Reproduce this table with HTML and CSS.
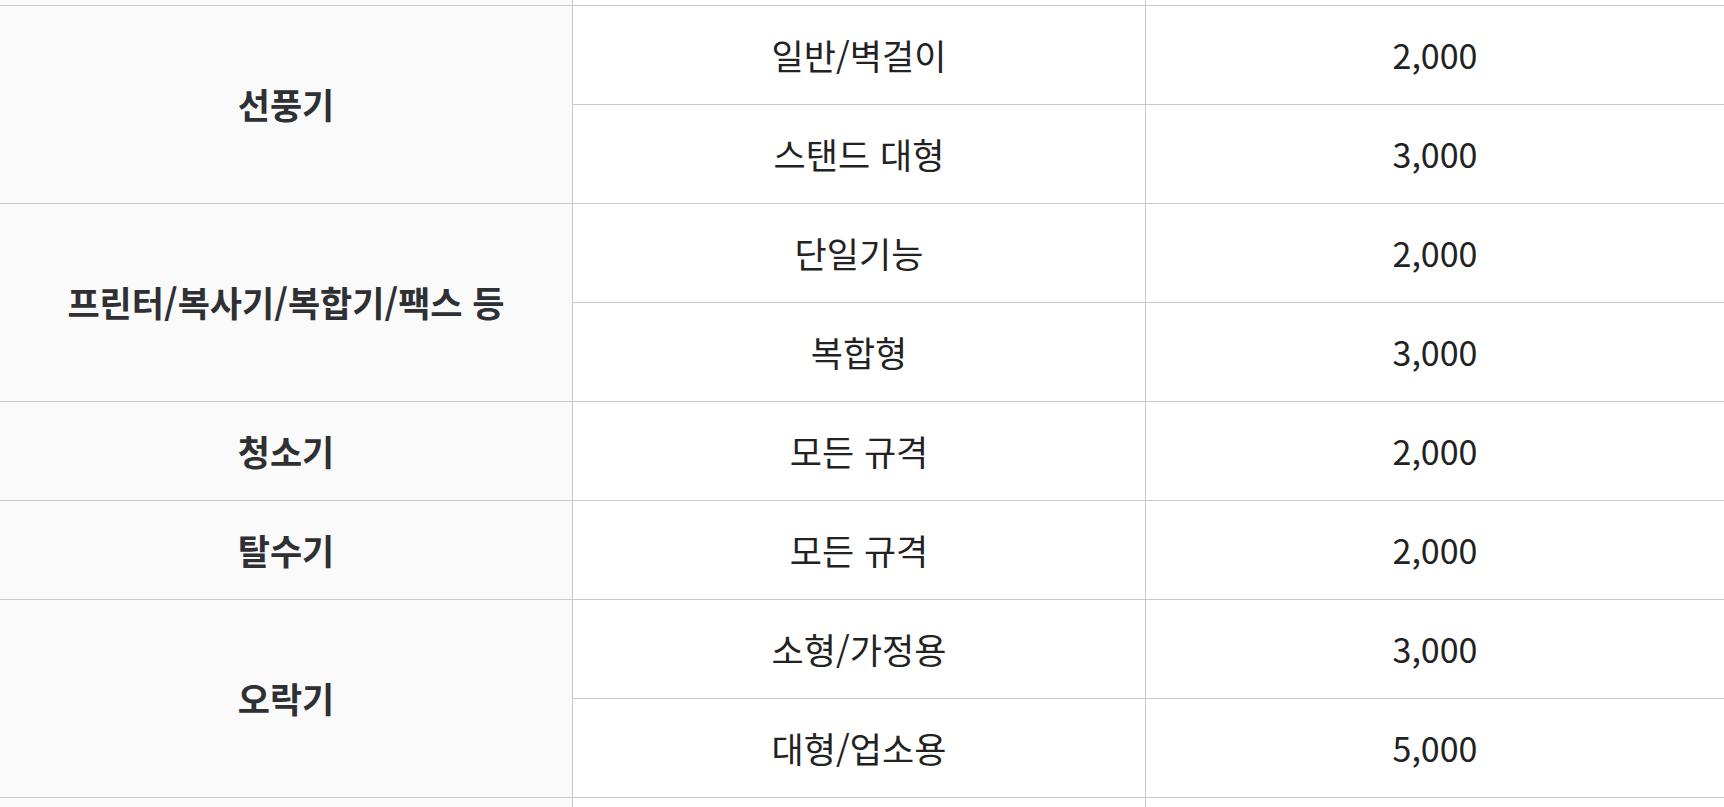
FILE: index.html
```html
<!DOCTYPE html>
<html lang="ko">
<head>
<meta charset="utf-8">
<link rel="stylesheet" href="styles.css">
</head>
<body>
<div class="table">
  <div class="cell cat edge"></div><div class="cell edge"></div><div class="cell num edge"></div>

  <div class="cell cat span2">선풍기</div>
  <div class="cell">일반/벽걸이</div><div class="cell num">2,000</div>
  <div class="cell">스탠드 대형</div><div class="cell num">3,000</div>

  <div class="cell cat span2">프린터/복사기/복합기/팩스 등</div>
  <div class="cell">단일기능</div><div class="cell num">2,000</div>
  <div class="cell">복합형</div><div class="cell num">3,000</div>

  <div class="cell cat">청소기</div>
  <div class="cell">모든 규격</div><div class="cell num">2,000</div>

  <div class="cell cat">탈수기</div>
  <div class="cell">모든 규격</div><div class="cell num">2,000</div>

  <div class="cell cat span2">오락기</div>
  <div class="cell">소형/가정용</div><div class="cell num">3,000</div>
  <div class="cell">대형/업소용</div><div class="cell num">5,000</div>

  <div class="cell cat edge"></div><div class="cell edge"></div><div class="cell num edge"></div>
</div>
</body>
</html>
```

FILE: styles.css
```css
html, body {
  margin: 0;
  padding: 0;
  background: #ffffff;
  overflow: hidden;
}

.table {
  display: grid;
  grid-template-columns: 573px 573px 1fr;
  grid-auto-rows: 99px;
  grid-template-rows: 6px;
  width: 1724px;
  font-family: "Noto Sans CJK KR", "Noto Sans", sans-serif;
  color: #222222;
}

.cell {
  box-sizing: border-box;
  display: flex;
  align-items: center;
  justify-content: center;
  border-bottom: 1px solid #c9c9c9;
  border-right: 1px solid #c9c9c9;
  font-size: 35px;
  font-weight: 400;
  background: #ffffff;
  padding-bottom: 2px;
}

.cell.num {
  border-right: none;
  font-size: 34px;
}

.cell.cat {
  background: #fafafa;
  font-weight: 700;
  color: #2f3033;
}

.cell.span2 {
  grid-row: span 2;
}

.cell.edge {
  padding: 0;
}
```
